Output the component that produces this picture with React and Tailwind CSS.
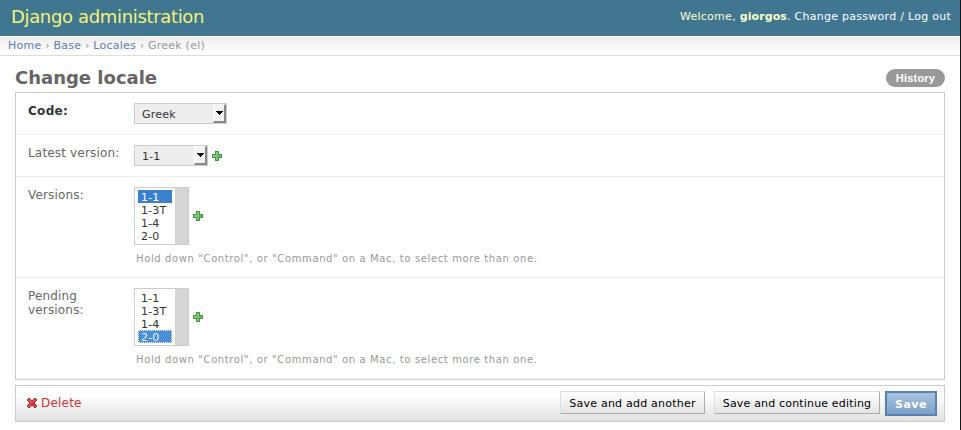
function PlusIcon() {
  return (
    <svg width="10" height="10" viewBox="0 0 10 10" shapeRendering="crispEdges">
      <path d="M3 0h4v3h3v4h-3v3h-4v-3h-3v-4h3z" fill="#45983f" />
      <path d="M4 1h2v3h3v2h-3v3h-2v-3h-3v-2h3z" fill="#84cc7c" />
      <path d="M5 4h4v2h-3v3h-1z" fill="#68ba60" />
    </svg>
  );
}

function DeleteIcon() {
  return (
    <svg width="10" height="10" viewBox="0 0 10 10" shapeRendering="crispEdges">
      <path d="M1 0h2v1h1v1h2v-1h1v-1h2v1h1v2h-1v1h-1v2h1v1h1v2h-1v1h-2v-1h-1v-1h-2v1h-1v1h-2v-1h-1v-2h1v-1h1v-2h-1v-1h-1v-2h1z" fill="#a8232a" />
      <path d="M1 1h2v1h1v1h2v-1h1v-1h2v2h-1v1h-1v2h1v1h1v2h-2v-1h-1v-1h-2v1h-1v1h-2v-2h1v-1h1v-2h-1v-1h-1z" fill="#e25a5c" />
      <path d="M4 4h3v2h1v2h-1v-1h-3z" fill="#cf3339" />
      <path d="M2 3h1v1h-1zM7 3h1v1h-1zM2 6h1v1h-1zM7 6h1v1h-1zM2 4h1v2h-1zM7 4h1v2h-1z" fill="#b52a30" />
    </svg>
  );
}

function Dropdown({ value, width }) {
  return (
    <div className={`flex h-[21px] ${width} border border-[#ccc] bg-[#ededed] text-[11px] leading-[21px] text-[#333]`}>
      <span className="grow pl-[7px] tracking-[0.2px]">{value}</span>
      <span className="flex w-[13px] items-center justify-center border-t border-l border-r-2 border-b-2 border-t-white border-l-white border-r-[#888] border-b-[#888] bg-[#f3f3f3]">
        <svg width="7" height="4" viewBox="0 0 7 4" shapeRendering="crispEdges">
          <path d="M0 0h7v1h-1v1h-1v1h-1v1h-1v-1h-1v-1h-1v-1h-1z" fill="#000" />
        </svg>
      </span>
    </div>
  );
}

const versions = ["1-1", "1-3T", "1-4", "2-0"];

function ListBox({ selected, focused }) {
  return (
    <div className="flex h-[58px] w-[55px] border border-[#ccc] bg-white text-[11px] tracking-[0.2px]">
      <div className="flex grow flex-col pt-[2px] pr-[3px] pl-[3px]">
        {versions.map((v) => {
          const on = v === selected;
          const look = !on
            ? "text-[#333] border-transparent"
            : focused
              ? "bg-[#4a90d9] text-[#e6f0fa] border-dotted border-white"
              : "bg-[#3a80cd] text-white border-transparent";
          return (
            <div key={v} className={`h-[13px] border ${look} pl-[2px] leading-[13px] whitespace-nowrap`}>
              {v}
            </div>
          );
        })}
      </div>
      <div className="w-[13px] bg-[#d5d5d5]" />
    </div>
  );
}

function Field({ label, height, bold, help, children }) {
  return (
    <div className={`flex ${height} border-b border-[#eee] pt-[10px] pl-3`}>
      <div className={`w-[106px] shrink-0 pt-px leading-[14px] ${bold ? "text-[12px] font-bold tracking-[0.3px] text-[#333]" : "text-[12px] tracking-[0.17px] text-[#666]"}`}>
        {label}
      </div>
      <div>
        <div className="flex items-center gap-1">{children}</div>
        {help && (
          <p className="mt-[7px] pl-[2px] text-[10px] leading-[14px] tracking-[0.62px] text-[#999]">
            Hold down "Control", or "Command" on a Mac, to select more than one.
          </p>
        )}
      </div>
    </div>
  );
}

function Button({ children, className }) {
  return (
    <button className={`h-[23px] border border-t-[#ddd] border-r-[#aaa] border-b-[#aaa] border-l-[#ddd] bg-linear-to-b from-white to-[#e4e4e4] pt-px text-[11px] leading-[21px] whitespace-nowrap text-black ${className}`}>
      {children}
    </button>
  );
}

export default function App() {
  return (
    <div className="h-[430px] w-[961px] overflow-hidden border-r border-[#181818] bg-white font-['DejaVu_Sans',sans-serif] text-[12px]">
      <header className="flex h-9 justify-between bg-[#417690] pr-[9px] pl-[11px] text-[#ffc]">
        <h1 className="text-[18px] leading-[33px] tracking-[-0.34px] text-[#f4f379]">Django administration</h1>
        <div className="text-[11px] leading-[33px] tracking-[0.27px] whitespace-nowrap">
          Welcome, <b className="tracking-[0.1px]">giorgos</b>. <a className="text-white">Change password</a> / <a className="text-white">Log out</a>
        </div>
      </header>
      <nav className="h-5 border-t border-b border-t-white border-b-[#ddd] bg-linear-to-b from-[#eee] to-white to-90% pl-2 text-[11px] leading-[17px] tracking-[0.23px] text-[#999]">
        <a className="text-[#5b80b2]">Home</a> › <a className="text-[#5b80b2]">Base</a> › <a className="text-[#5b80b2]">Locales</a> › Greek (el)
      </nav>
      <main className="w-[945px] pl-[15px]">
        <div className="flex h-9 items-start justify-between">
          <h2 className="pt-[11px] text-[18px] leading-[22px] font-bold text-[#666]">Change locale</h2>
          <a className="mt-[13px] h-[18px] w-[59px] rounded-full bg-[#999] text-center font-['Liberation_Sans',sans-serif] text-[11px] leading-[18px] font-bold tracking-[0.2px] text-white">
            History
          </a>
        </div>
        <section className="border border-[#ccc]">
          <Field label="Code:" height="h-[42px]" bold>
            <Dropdown value="Greek" width="w-[93px]" />
          </Field>
          <Field label="Latest version:" height="h-[42px]">
            <Dropdown value="1-1" width="w-[74px]" />
            <PlusIcon />
          </Field>
          <Field label="Versions:" height="h-[101px]" help>
            <ListBox selected="1-1" />
            <PlusIcon />
          </Field>
          <Field label={<>Pending<br />versions:</>} height="h-[101px]" help>
            <ListBox selected="2-0" focused />
            <PlusIcon />
          </Field>
        </section>
        <footer className="mt-[5px] flex h-[37px] items-start justify-between border border-[#ccc] bg-linear-to-b from-white from-25% to-[#e1e1e1] pt-[5px] pr-[7px] pl-[11px]">
          <a className="flex h-6 items-center gap-1 text-[12px] leading-[24px] tracking-[0.2px] text-[#cc3434]">
            <DeleteIcon />
            Delete
          </a>
          <div className="flex items-start">
            <Button className="w-[145px] tracking-[0.22px]">Save and add another</Button>
            <Button className="ml-[9px] w-[166px] tracking-[0.17px]">Save and continue editing</Button>
            <button className="ml-[5px] h-[25px] w-[52px] border-2 border-[#5b80b2] bg-linear-to-b from-[#a9c3e1] to-[#7ca0c7] pt-px text-[11px] leading-[22px] font-bold tracking-[0.5px] text-white">
              Save
            </button>
          </div>
        </footer>
      </main>
    </div>
  );
}
